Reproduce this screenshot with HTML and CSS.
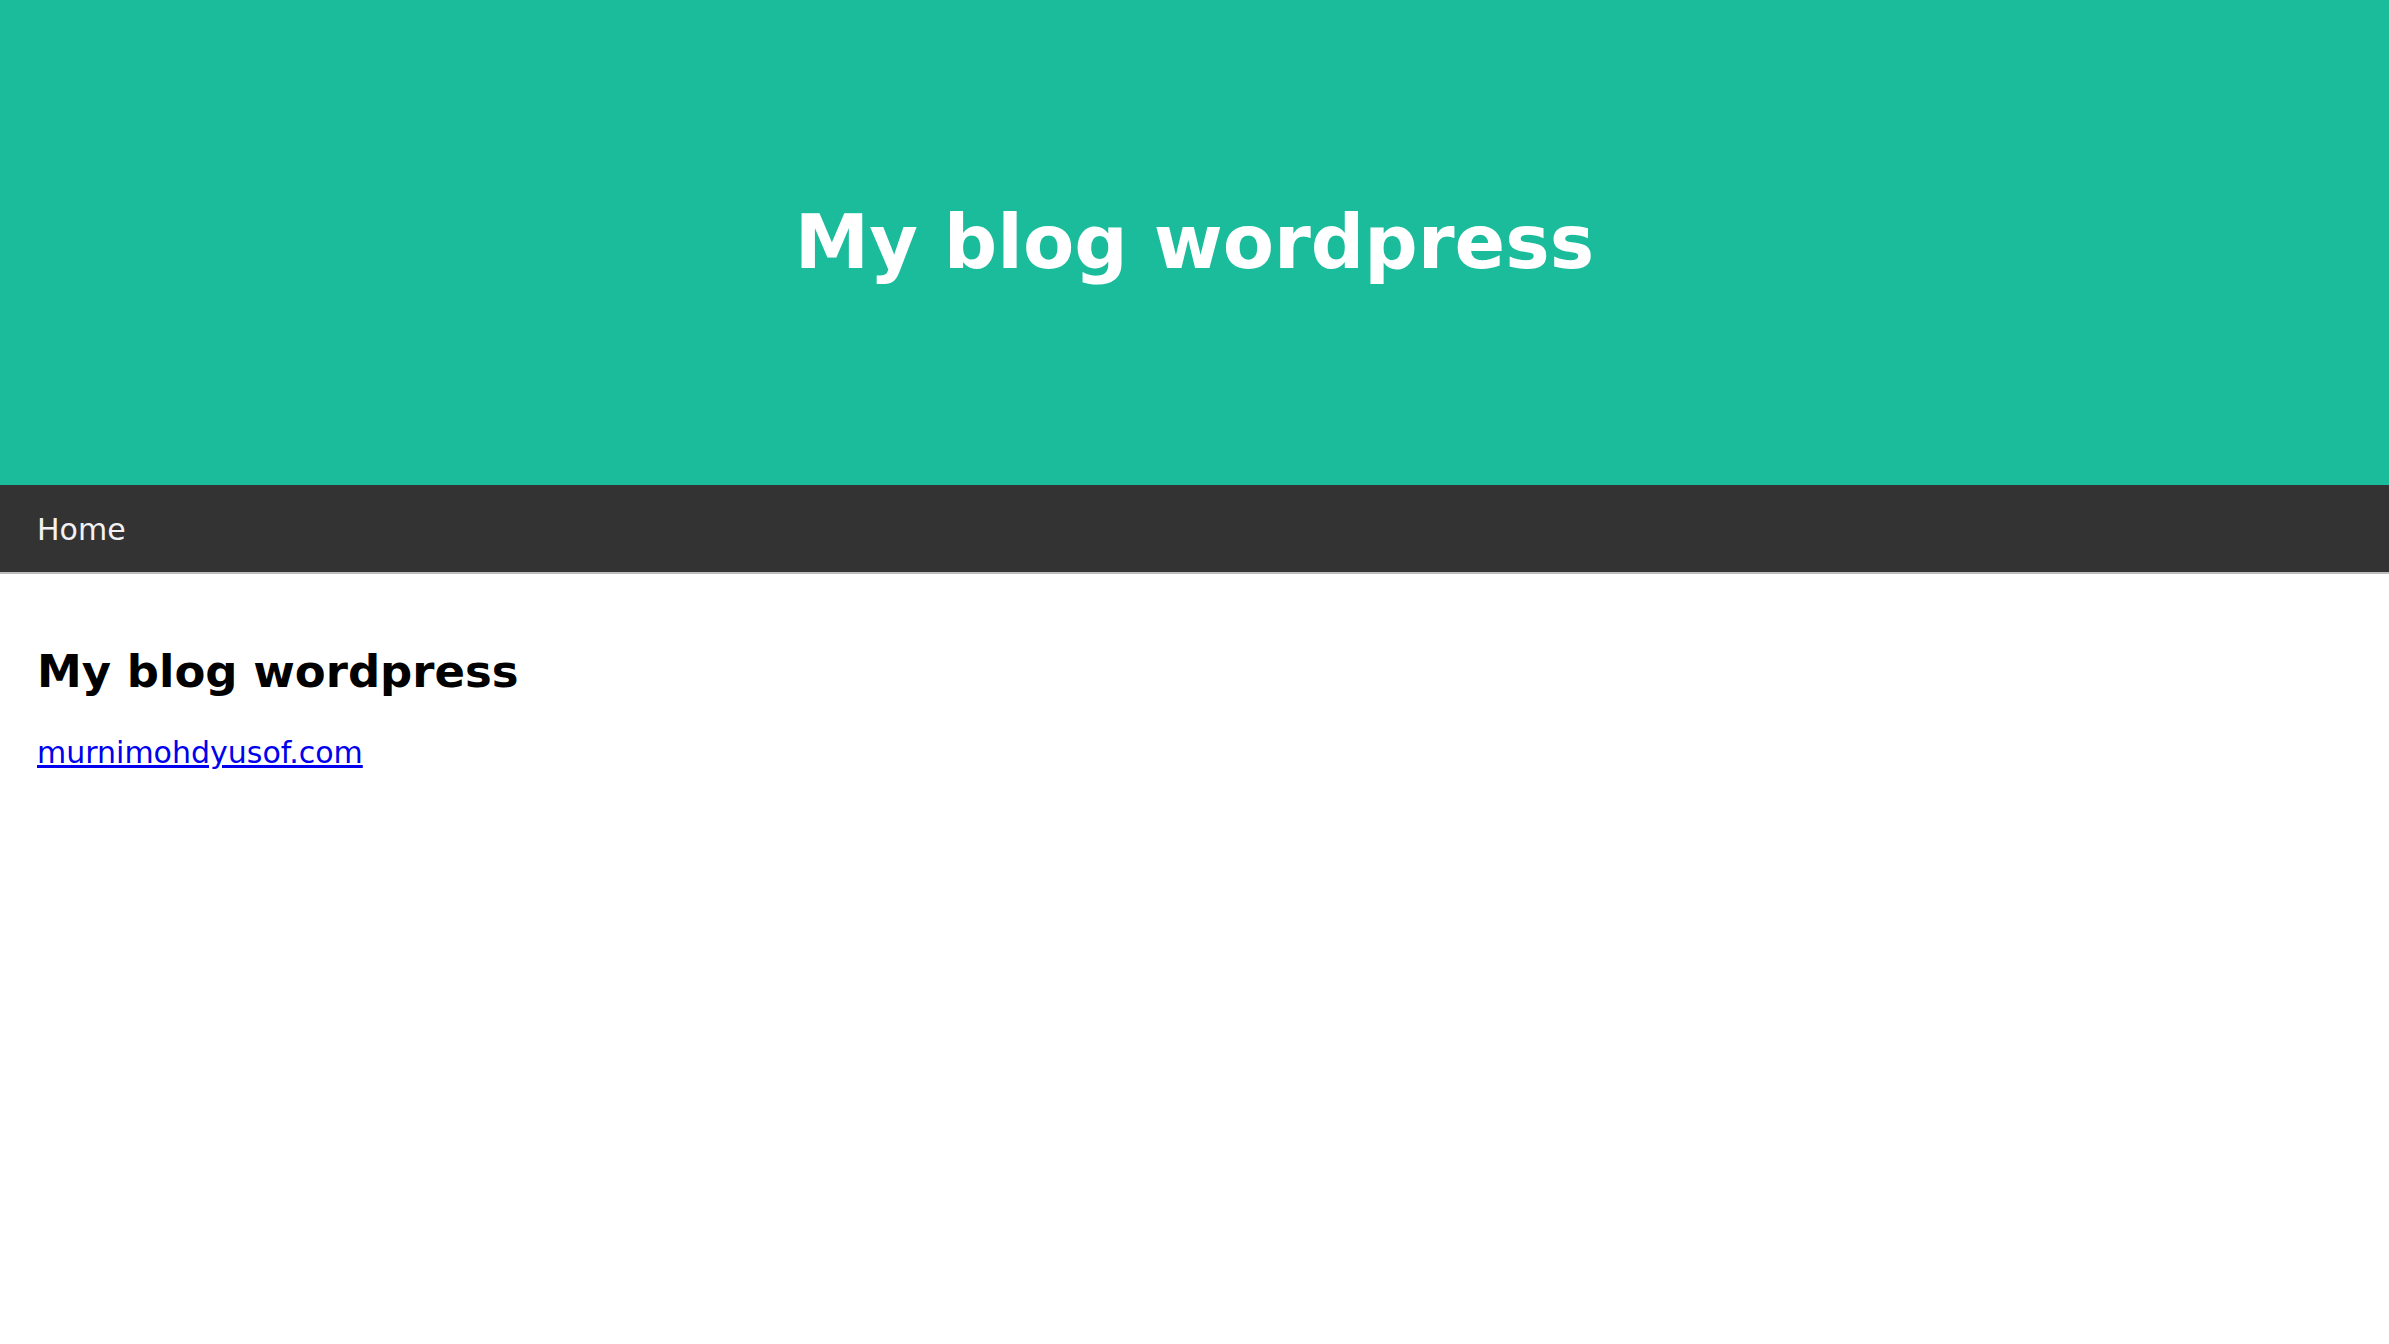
FILE: index.html
```html
<!DOCTYPE html>
<html lang="en">
<head>
<meta charset="utf-8">
<title>My blog wordpress</title>
<link rel="stylesheet" href="styles.css">
</head>
<body>
<header class="hero">
  <h1 class="hero-title">My blog wordpress</h1>
</header>
<nav class="navbar">
  <a class="nav-link" href="#">Home</a>
</nav>
<main class="content">
  <h2 class="post-title">My blog wordpress</h2>
  <p class="post-text"><a href="#">murnimohdyusof.com</a></p>
</main>
</body>
</html>
```
FILE: styles.css
```css
html, body {
  margin: 0;
  padding: 0;
  background: #ffffff;
}
body {
  font-family: "DejaVu Sans", "Liberation Sans", sans-serif;
  font-size: 30px;
  color: #000;
}
.hero {
  height: 485px;
  background: #1abc9c;
  display: flex;
  align-items: center;
  justify-content: center;
}
.hero-title {
  margin: 0;
  color: #ffffff;
  font-size: 74.7px;
  font-weight: bold;
  line-height: 1;
  padding-top: 2px;
}
.navbar {
  background: #333333;
  height: 87px;
  border-bottom: 2px solid #bdbdbd;
  display: flex;
  align-items: center;
  padding-left: 37px;
}
.nav-link {
  color: #f2f2f2;
  text-decoration: none;
  line-height: 87px;
  padding-top: 2px;
}
.content {
  padding: 0 37px;
}
.post-title {
  margin: 71px 0 0;
  font-size: 45px;
  font-weight: bold;
  line-height: normal;
}
.post-text {
  margin: 37px 0 0;
}
.post-text a {
  color: #0000ee;
}
```
